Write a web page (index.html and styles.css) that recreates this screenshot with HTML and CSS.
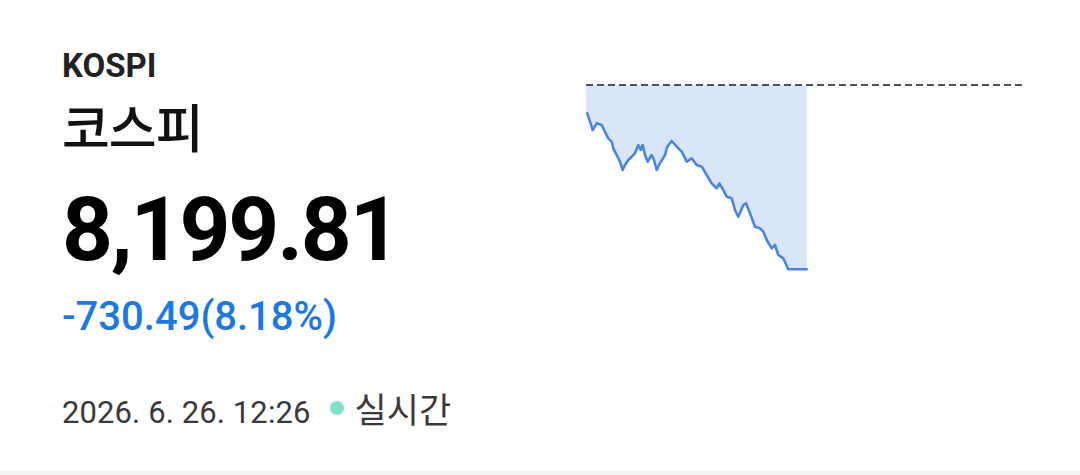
FILE: index.html
```html
<!DOCTYPE html>
<html lang="ko">
<head>
<meta charset="utf-8">
<title>코스피</title>
<link rel="stylesheet" href="styles.css">
</head>
<body>
<main class="card">
  <section class="info">
    <div class="code">KOSPI</div>
    <h1 class="name">코스피</h1>
    <div class="price">8,199.81</div>
    <div class="change">-730.49(8.18%)</div>
    <div class="time">
      <span class="stamp">2026. 6. 26. 12:26</span>
      <span class="live-dot"></span>
      <span class="live">실시간</span>
    </div>
  </section>
  <svg class="chart" viewBox="586 80 440 200" width="440" height="200" aria-hidden="true">
    <path class="area" d="M586,85 L586,110 L587.3,113.3 L590,121.7 L592.7,130 L596.7,123.3 L601.7,125 L605,131.7 L608.3,138.3 L611.7,141.7 L613.3,148.3 L616.7,155 L620,161.7 L622.7,170 L625,165 L628.3,160 L631.7,156.7 L635,153.3 L638.3,145 L640.7,150 L642.7,145 L645,155 L647.7,161.7 L651.7,155 L654,160 L656.7,170 L660,163.3 L665,155 L667.3,146.7 L671.7,141 L676.7,146.7 L681.7,151.7 L686.7,161.7 L691.7,158.3 L696.7,165 L701.7,166.7 L706.7,175 L711.7,183.3 L716.7,188.3 L719.3,183.3 L723.3,190 L726.7,196.7 L731.7,198.3 L735,210 L738.3,216.7 L743.3,205 L746,203.3 L750,213.3 L755,226.7 L760,228.3 L763.3,231.7 L766.7,240 L771.7,248.3 L775,245 L778.3,255 L783.3,258.3 L788.3,269.3 L806.7,269.3 L806.7,85 Z"/>
    <path class="line" d="M587.3,113.3 L590,121.7 L592.7,130 L596.7,123.3 L601.7,125 L605,131.7 L608.3,138.3 L611.7,141.7 L613.3,148.3 L616.7,155 L620,161.7 L622.7,170 L625,165 L628.3,160 L631.7,156.7 L635,153.3 L638.3,145 L640.7,150 L642.7,145 L645,155 L647.7,161.7 L651.7,155 L654,160 L656.7,170 L660,163.3 L665,155 L667.3,146.7 L671.7,141 L676.7,146.7 L681.7,151.7 L686.7,161.7 L691.7,158.3 L696.7,165 L701.7,166.7 L706.7,175 L711.7,183.3 L716.7,188.3 L719.3,183.3 L723.3,190 L726.7,196.7 L731.7,198.3 L735,210 L738.3,216.7 L743.3,205 L746,203.3 L750,213.3 L755,226.7 L760,228.3 L763.3,231.7 L766.7,240 L771.7,248.3 L775,245 L778.3,255 L783.3,258.3 L788.3,269.3 L806.7,269.3"/>
    <line class="base" x1="586" y1="85" x2="1022" y2="85"/>
  </svg>
</main>
<div class="divider"></div>
</body>
</html>
```

FILE: styles.css
```css
html, body {
  margin: 0;
  padding: 0;
  background: #ffffff;
}

body {
  width: 1080px;
  height: 475px;
  overflow: hidden;
  font-family: Roboto, "Noto Sans CJK KR", sans-serif;
}

.card {
  height: 471px;
  display: flex;
  align-items: flex-start;
  box-sizing: border-box;
  padding-left: 62px;
}

.info {
  width: 524px;
  display: flex;
  flex-direction: column;
  padding-top: 46px;
}

.code {
  font-size: 33px;
  line-height: 40px;
  font-weight: 700;
  color: #222222;
}

.name {
  margin: 10px 0 0;
  font-family: "Noto Sans CJK KR", sans-serif;
  font-size: 52px;
  line-height: 60px;
  font-weight: 500;
  letter-spacing: -1px;
  color: #111111;
}

.price {
  margin-top: 24px;
  font-size: 89px;
  line-height: 100px;
  font-weight: 700;
  letter-spacing: -2.2px;
  color: #000000;
}

.change {
  margin-top: 13px;
  font-size: 40px;
  line-height: 48px;
  font-weight: 500;
  color: #1e78e2;
}

.time {
  margin-top: 47px;
  display: flex;
  align-items: baseline;
  height: 40px;
  font-size: 31px;
  line-height: 40px;
  color: #3a3a3c;
}

.stamp {
  letter-spacing: 0.1px;
}

.live-dot {
  width: 14px;
  height: 14px;
  border-radius: 50%;
  background: #7fe0cf;
  margin: 0 11px 0 19px;
  align-self: center;
}

.live {
  font-family: "Noto Sans CJK KR", sans-serif;
  font-size: 35px;
}

.chart {
  display: block;
  margin-top: 80px;
}

.chart .area {
  fill: #d9e5f8;
}

.chart .line {
  fill: none;
  stroke: #4a85e0;
  stroke-width: 2.6;
  stroke-linejoin: round;
  stroke-linecap: round;
}

.chart .base {
  stroke: #4f5256;
  stroke-width: 2;
  stroke-dasharray: 7 4;
}

.divider {
  height: 4px;
  background: #f2f2f2;
}
```
